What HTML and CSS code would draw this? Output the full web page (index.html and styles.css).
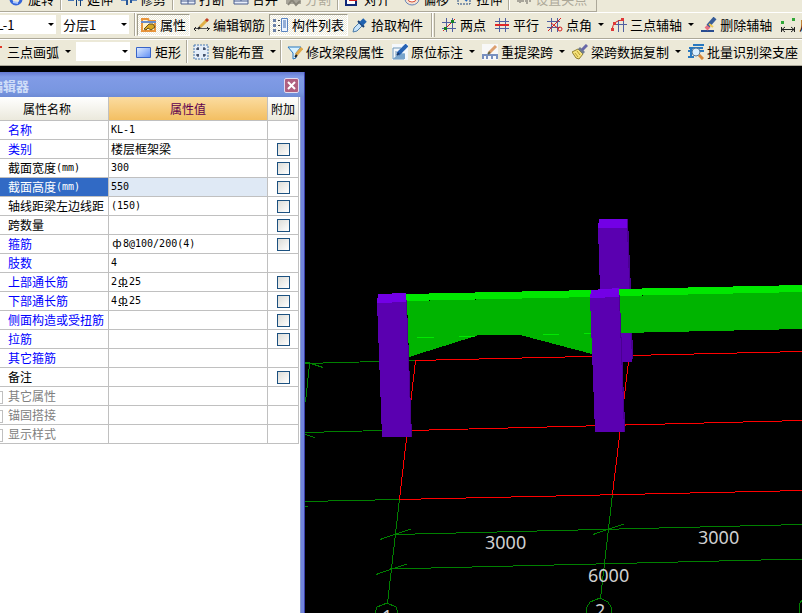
FILE: index.html
```html
<!DOCTYPE html>
<html lang="zh-CN">
	<head>
		<meta charset="UTF-8">
		<meta name="viewport" content="width=device-width, initial-scale=1">
		<title>属性编辑器</title>
		<link rel="stylesheet" href="styles.css">
	</head>

	<body>
		<header class="toolbars">
			<!-- edit bar -->
			<div class="bar bar-edit">
				<button class="btn"><svg class="icon" viewBox="0 0 16 16"><circle cx="7" cy="8" r="5" fill="none" stroke="#3565d8" stroke-width="3"/><path d="M4 11l5 1" stroke="#a9c4ff" stroke-width="2"/></svg>旋转</button>
				<span class="sep"></span>
				<button class="btn"><svg class="icon" viewBox="0 0 16 16"><path d="M0 9h6M10 9h5" stroke="#4878b8" stroke-width="2"/><path d="M8.500 2v13M12.500 2v13" stroke="#123c74"/></svg>延伸</button>
				<button class="btn"><svg class="icon" viewBox="0 0 16 16"><path d="M0 9h6M11 9h5" stroke="#6088c0" stroke-width="2"/><path d="M6 2v12M10 2v10" stroke="#285898" stroke-width="2"/></svg>修剪</button>
				<span class="sep"></span>
				<button class="btn"><svg class="icon" viewBox="0 0 16 16"><path d="M1 4h14v9H1zM8 4v9M1 10h14" fill="#e8eefa" stroke="#485c8c"/></svg>打断</button>
				<button class="btn"><svg class="icon" viewBox="0 0 16 16"><path d="M1 4h14v9H1zM8 4v6M1 10h14" fill="#e8eefa" stroke="#485c8c"/></svg>合并</button>
				<button class="btn" disabled><svg class="icon" viewBox="0 0 16 16"><path d="M0 6h15v7H0z" fill="#a8a59a"/><path d="M2 14l4-5 4 5 4-4" fill="none" stroke="#88857a" stroke-width="2"/></svg>分割</button>
				<span class="sep"></span>
				<button class="btn drop"><svg class="icon" viewBox="0 0 16 16"><path d="M1 2h10v12H1z" fill="#fff" stroke="#102878" stroke-width="2"/><path d="M4 9h8" stroke="#d02020" stroke-width="2"/></svg>对齐</button>
				<button class="btn"><svg class="icon" viewBox="0 0 16 16"><ellipse cx="8" cy="8" rx="7" ry="6" fill="#f4e0d0" stroke="#6484b8"/><ellipse cx="8" cy="8" rx="4" ry="3" fill="#fff" stroke="#d85038"/></svg>偏移</button>
				<button class="btn"><svg class="icon" viewBox="0 0 16 16"><path d="M1 3h12v10H1z" fill="none" stroke="#204880" stroke-dasharray="2 1"/><path d="M5 5l5 5" stroke="#2868c0" stroke-width="2"/></svg>拉伸</button>
				<span class="sep"></span>
				<button class="btn" disabled><svg class="icon" viewBox="0 0 16 16"><path d="M1 10h14M4 12v-5M11 13v-5" stroke="#a8a59a" stroke-width="2" stroke-dasharray="3 1"/></svg>设置夹点</button>
			</div>

			<!-- component bar -->
			<div class="bar bar-component">
				<label class="combo combo-name"><select aria-label="构件"><option>KL-1</option></select></label>
				<label class="combo combo-layer"><select aria-label="分层"><option>分层1</option></select></label>
				<span class="sep"></span>
				<button class="btn pressed"><svg class="icon" viewBox="0 0 16 16"><path d="M1 2h6l1 2h6v10H1z" fill="#fff3c8" stroke="#e8953c" stroke-width="2"/><path d="M0 5h15" stroke="#6a8cc8" stroke-width="2"/><path d="M3 12l5-5h4l2 3-4 3-3-2-2 2z" fill="#d8a820" stroke="#605020"/></svg>属性</button>
				<button class="btn"><svg class="icon" viewBox="0 0 16 16"><path d="M0 11.500h16" stroke="#555"/><path d="M2 10l-2 2 2 2M13 10l2 2-2 2" fill="none" stroke="#222"/><path d="M6 10l7-7" stroke="#e0b048" stroke-width="3"/><path d="M12 4l2-2" stroke="#c04028" stroke-width="3"/><path d="M4 12l2-2" stroke="#222" stroke-width="2"/></svg>编辑钢筋</button>
				<button class="btn pressed"><svg class="icon" viewBox="0 0 16 16"><path d="M0 2h3v3H0zM0 7h3v3H0zM0 12h3v3H0z" fill="#6a80a8"/><path d="M5 3.500h2M5 8.500h2M5 13.500h2" stroke="#444"/><path d="M8.500 1.500h6v13h-6z" fill="#eef5ff" stroke="#5a84c0"/><path d="M10 4h3M10 6h3M10 8h3M10 10h3" stroke="#3a68b0"/></svg>构件列表</button>
				<button class="btn"><svg class="icon" viewBox="0 0 16 16"><path d="M1 15l1-4 6-6 3 3-6 6z" fill="#c8e4fa" stroke="#4c7ca8"/><path d="M6 4l6 6" stroke="#143c70" stroke-width="2"/><path d="M9 7l4-4" stroke="#1f62b0" stroke-width="5"/></svg>拾取构件</button>
				<span class="grip"></span>
				<button class="btn"><svg class="icon" viewBox="0 0 16 16"><path d="M5.500 1v14M11.500 1v14M1 5.500h14M1 11.500h14" stroke="#5060a0"/><path d="M2 14L14 2" stroke="#d82020"/><path d="M3 10h3v3H3zM10 3h3v3h-3z" fill="#168020"/></svg>两点</button>
				<button class="btn"><svg class="icon" viewBox="0 0 16 16"><path d="M5.500 1v14M11.500 1v14" stroke="#5060a0"/><path d="M1 4.500h14M1 11.500h14" stroke="#5060a0"/><path d="M1 8h14" stroke="#e02828" stroke-width="2"/></svg>平行</button>
				<button class="btn drop"><svg class="icon" viewBox="0 0 16 16"><path d="M4.500 1v14M10.500 1v14M0 4.500h13M0 10.500h13" stroke="#5060a0"/><path d="M1 14L14 1M4 6l8 6" stroke="#d82020"/><circle cx="13" cy="12" r="2" fill="none" stroke="#d82020"/></svg>点角</button>
				<button class="btn drop"><svg class="icon" viewBox="0 0 16 16"><path d="M7.500 3v12M12.500 1v14M2 7.500h14" stroke="#5060a0"/><path d="M1 13Q2 3 12 3" fill="none" stroke="#d82020"/><path d="M0 11h3v3H0zM10 1h3v3h-3zM2 5h3v3H2z" fill="#e03838"/></svg>三点辅轴</button>
				<button class="btn"><svg class="icon" viewBox="0 0 16 16"><path d="M0 14h13" stroke="#284c90" stroke-width="2"/><path d="M5 12l3-3" stroke="#e87080" stroke-width="4"/><path d="M7 9l7-8" stroke="#365c98" stroke-width="4"/><path d="M8 7l4 3" stroke="#f0c850" stroke-width="2"/></svg>删除辅轴</button>
				<button class="btn"><svg class="icon" viewBox="0 0 16 16"><path d="M1 4h3v3H1zM12 1h3v3h-3z" fill="#30a838"/><path d="M1.500 10v5M14.500 10v5M2 12.500h12M5 10l-3 2.500 3 2.500M11 10l3 2.500-3 2.500" fill="none" stroke="#222"/></svg>尺</button>
			</div>

			<!-- drawing bar -->
			<div class="bar bar-draw">
				<button class="btn drop"><svg class="icon" viewBox="0 0 16 16"><path d="M2 14Q4 3 13 3" fill="none" stroke="#5060a0"/><path d="M11 2h3v2h-3z" fill="#e03828"/></svg>三点画弧</button>
				<label class="combo combo-arc"><select aria-label="画弧方式"><option></option></select></label>
				<button class="btn"><svg class="icon" viewBox="0 0 16 16"><defs><linearGradient id="rect-fill" x2="1" y2="1"><stop stop-color="#e4f0ff"/><stop offset="1" stop-color="#5d8cf4"/></linearGradient></defs><path d="M.5 3.500h14v10H.5z" fill="url(#rect-fill)" stroke="#3864c8"/></svg>矩形</button>
				<span class="sep"></span>
				<button class="btn drop"><svg class="icon" viewBox="0 0 16 16"><path d="M1 1h14v14H1z" fill="#e4edf8" stroke="#4878b0" stroke-dasharray="2 1"/><path d="M5 3v3M3 5h3M11 3v3M10 5h3M5 10v3M3 11h3M11 10v3M10 11h3" stroke="#102040"/></svg>智能布置</button>
				<span class="sep"></span>
				<button class="btn"><svg class="icon" viewBox="0 0 16 16"><path d="M1 3h13L9 9v5l-3 1V9z" fill="#d8f2ff" stroke="#2878c0"/><path d="M9 11l6-7" stroke="#e0a848" stroke-width="3"/><path d="M8 13l2-2" stroke="#222" stroke-width="2"/></svg>修改梁段属性</button>
				<button class="btn drop"><svg class="icon" viewBox="0 0 16 16"><path d="M0 0h16v16H0z" fill="#f4f8fc"/><path d="M1 4h8M1 4v11h11V9M4 7v5h5" fill="none" stroke="#7098b8"/><path d="M1 15h12v-5L9 9l-5 3z" fill="#78a4cc"/><path d="M6 10l9-9" stroke="#2864b4" stroke-width="4"/><path d="M5 11l2-2" stroke="#153870" stroke-width="2"/></svg>原位标注</button>
				<button class="btn drop"><svg class="icon" viewBox="0 0 16 16"><path d="M0 0h16v16H0z" fill="#f8f8f8"/><path d="M1 15v-4h4v4M5 11h5v4M10 11h5v4" fill="none" stroke="#7890c0" stroke-width="2"/><path d="M7 9l7-7" stroke="#dda070" stroke-width="3"/><path d="M6 10l2-2" stroke="#664" stroke-width="2"/></svg>重提梁跨</button>
				<button class="btn drop"><svg class="icon" viewBox="0 0 16 16"><path d="M0 8l6-3 5 5-4 5-3-1z" fill="#f5e27a" stroke="#908030"/><path d="M6 5l5 5 2-2-5-5z" fill="#707c90"/><path d="M10 6l5-5" stroke="#6868a8" stroke-width="3"/><path d="M3 9l3 4M5 7l3 4" stroke="#b89c30"/></svg>梁跨数据复制</button>
				<button class="btn"><svg class="icon" viewBox="0 0 16 16"><path d="M5 1h11M1 4h14M0 7h6M12 7h4M3 4v9M0 13h6" fill="none" stroke="#2878c0" stroke-width="2"/><circle cx="8" cy="8" r="4" fill="#d8efff" stroke="#587898"/><path d="M11 11l4 4" stroke="#d88838" stroke-width="3"/></svg>批量识别梁支座</button>
			</div>
		</header>

		<main class="workspace">
			<section class="panel">
				<div class="titlebar">
					<span class="title">属性编辑器</span>
					<button class="close" aria-label="关闭"><svg viewBox="0 0 13 13"><path d="M3 3l7 7M10 3l-7 7" stroke="#fff" stroke-width="2"/></svg></button>
				</div>
				<table class="props">
					<thead>
						<tr><th class="col-name">属性名称</th><th class="col-value">属性值</th><th class="col-extra">附加</th></tr>
					</thead>
					<tbody>
						<tr class="key"><td>名称</td><td>KL-1</td><td></td></tr>
						<tr class="key"><td>类别</td><td><span class="cn">楼层框架梁</span></td><td><input type="checkbox" aria-label="类别"></td></tr>
						<tr><td>截面宽度<span class="unit">(mm)</span></td><td>300</td><td><input type="checkbox" aria-label="截面宽度"></td></tr>
						<tr class="selected"><td>截面高度<span class="unit">(mm)</span></td><td>550</td><td><input type="checkbox" aria-label="截面高度"></td></tr>
						<tr><td>轴线距梁左边线距</td><td>(150)</td><td><input type="checkbox" aria-label="轴线距梁左边线距"></td></tr>
						<tr><td>跨数量</td><td></td><td><input type="checkbox" aria-label="跨数量"></td></tr>
						<tr class="key"><td>箍筋</td><td><span class="dia">ф</span>8@100/200(4)</td><td><input type="checkbox" aria-label="箍筋"></td></tr>
						<tr class="key"><td>肢数</td><td>4</td><td></td></tr>
						<tr class="key"><td>上部通长筋</td><td>2<span class="dia ribbed">ф</span>25</td><td><input type="checkbox" aria-label="上部通长筋"></td></tr>
						<tr class="key"><td>下部通长筋</td><td>4<span class="dia ribbed">ф</span>25</td><td><input type="checkbox" aria-label="下部通长筋"></td></tr>
						<tr class="key"><td>侧面构造或受扭筋</td><td></td><td><input type="checkbox" aria-label="侧面构造或受扭筋"></td></tr>
						<tr class="key"><td>拉筋</td><td></td><td><input type="checkbox" aria-label="拉筋"></td></tr>
						<tr class="key"><td>其它箍筋</td><td></td><td></td></tr>
						<tr><td>备注</td><td></td><td><input type="checkbox" aria-label="备注"></td></tr>
						<tr class="group"><td><button class="expand" aria-label="展开"></button>其它属性</td><td></td><td></td></tr>
						<tr class="group"><td><button class="expand" aria-label="展开"></button>锚固搭接</td><td></td><td></td></tr>
						<tr class="group"><td><button class="expand" aria-label="展开"></button>显示样式</td><td></td><td></td></tr>
					</tbody>
				</table>
			</section>

			<svg class="scene" viewBox="305 66 497 547" preserveAspectRatio="xMinYMin slice">
				<!-- axis grid -->
				<g class="axis">
					<path d="M305 363.500L415 360.500M305 432.500L382 430.500M305 501.500L399 499.500"/>
					<path d="M395 534.500L802 524.500M390 569L802 559"/>
					<path d="M399.500 499L387.500 603M612.500 494L600.500 598"/>
					<path d="M309.500 364L305.500 402M305 362.500h3l15 5M305 434.500l10 3M305 506.500h3"/>
					<path d="M380 539.500l31-10.500M376 574.500l31-10.500M593 534.500l31-10.500"/>
					<path d="M375 613l2-6 10-4 9 4 2 6M586 613l1-6 3-5 10-4 8 4 3 5 1 6M802 600l-3 5v8"/>
				</g>
				<g class="span">
					<path d="M415 360.500L802 351.500M410 430.500L802 420.500M399 499.500L802 490.500"/>
					<path d="M415.500 361L399.500 499M628.500 362L612.500 494"/>
				</g>

				<!-- rear column -->
				<path class="side" d="M626 219h2l3 71 2 66-1 6h-8z"/>
				<path class="column" d="M598 228h29l5 134h-11l-21-72z"/>
				<path class="cap" d="M599 219h28v9h-29z"/>

				<!-- beams -->
				<path class="beam" d="M407 301L592 297v57l-68-18-4-1h-41l-70 22z"/>
				<path class="beam-top" d="M406 294L592 290v7L406 301z"/>
				<path class="beam" d="M620 296L802 292v37L621 333z"/>
				<path class="beam-top" d="M619 289L802 285v7L619 296z"/>
				<path class="beam-edge" d="M417 337.500h17M459 336.500h16M543 334.500h16M584 333.500h8"/>

				<!-- front columns -->
				<path class="side" d="M406 295l1 10 5 132h-2l-5-135z"/>
				<path class="column" d="M377 303l29-1 5 135h-29z"/>
				<path class="cap" d="M378 294l28-1v9l-29 1z"/>
				<path class="side" d="M619 290l1 10 5 124v8h-3z"/>
				<path class="column" d="M590 298l29-1 5 135h-29z"/>
				<path class="cap" d="M591 290l28-2v9l-29 1z"/>

				<!-- dimensions -->
				<g class="dim">
					<text x="485" y="549">3000</text>
					<text x="698" y="544">3000</text>
					<text x="588" y="582">6000</text>
					<text x="382" y="623">1</text>
					<text x="595" y="617">2</text>
				</g>
			</svg>
		</main>
	</body>
</html>
```

FILE: styles.css
```css
* { box-sizing: border-box; }
body, html { height: 100%; margin: 0; padding: 0; }
body {
	display: flex;
	flex-direction: column;
	overflow: hidden;
	background: #000;
	font-family: "Noto Sans CJK SC", sans-serif;
	font-size: 13px;
	color: #000;
}
button, select { font: inherit; color: inherit; }

/* toolbars */
.toolbars { margin-top: -15px; background: #ece9d8; overflow: hidden; flex: none; }
.bar {
	display: flex;
	align-items: center;
	height: 27px;
	padding-bottom: 2px;
	border-top: 1px solid #fff;
	border-bottom: 1px solid #aca899;
	white-space: nowrap;
}
.bar > * { flex: none; }
.bar-edit { width: 597px; padding: 0 0 0 5px; border-right: 1px solid #aca899; }
.bar-component { overflow: hidden; }
.bar-draw { margin-left: -16px; }
.btn {
	display: flex;
	align-items: center;
	gap: 3px;
	height: 22px;
	padding: 0 3px;
	border: 1px solid transparent;
	background: none;
	line-height: 20px;
}
.btn:disabled { color: #aca899; }
.btn.pressed {
	border-color: #9d9a8b #fff #fff #9d9a8b;
	background: repeating-conic-gradient(#fff 0 25%, #ece9d8 0 50%) 0 0 / 2px 2px;
}
.btn.drop { padding-right: 2px; }
.btn.drop::after {
	content: "";
	margin-left: 3px;
	border: 3px solid transparent;
	border-top-color: #000;
	border-bottom: 0;
}
.bar-edit .btn.drop { padding-right: 0; }
.bar-edit .btn.drop::after { margin: 0; }
.icon { display: block; width: 16px; height: 16px; }
.sep { width: 2px; height: 23px; margin: 0 1px; background: #aca899; border-right: 1px solid #fff; }
.bar-edit .sep { margin: 0 2px; }
.grip { width: 4px; height: 25px; margin: 0 2px 0 4px; border: 1px solid #aca899; border-width: 0 1px; box-shadow: inset 1px 0 #fff; }

.combo { position: relative; display: block; height: 19px; background: #fff; }
.combo select {
	display: block;
	width: 100%;
	height: 19px;
	padding: 0 0 0 2px;
	border: 0;
	background: none;
	line-height: 19px;
	appearance: none;
}
.combo::after {
	content: "";
	position: absolute;
	right: 2px;
	top: 8px;
	border: 3px solid transparent;
	border-top-color: #000;
	border-bottom: 0;
	pointer-events: none;
}
.combo-name { width: 70px; margin: 0 5px 0 -14px; }
.combo-layer { width: 68px; margin-right: 4px; }
.combo-arc { width: 54px; margin: 0 2px; }

/* property panel */
.workspace { display: flex; flex: 1; min-height: 0; }
.panel {
	flex: none;
	width: 305px;
	margin-top: 6px;
	background: #fff;
	border-right: 1px solid #3a3fa8;
	box-shadow: inset -3px 0 #7184dc, inset -4px 0 #8c9fd0;
}
.titlebar {
	display: flex;
	align-items: center;
	justify-content: space-between;
	height: 25px;
	padding: 2px 5px 0 0;
	overflow: hidden;
	background: linear-gradient(#6478d0, #819be6 20%, #7896e0 80%, #6d8ad4);
}
.title { margin-left: -36px; font-weight: bold; color: #d0def8; }
.close { width: 15px; height: 15px; padding: 0; border: 1px solid #e4dcf0; border-radius: 2px; background: #b06080; }
.close svg { display: block; width: 13px; height: 13px; }

.props { width: 299px; border-collapse: separate; border-spacing: 0; table-layout: fixed; font-size: 12px; line-height: 18px; }
.props th, .props td {
	height: 19px;
	padding: 0 0 0 2px;
	border: 1px solid #c0c0c0;
	border-width: 0 1px 1px 0;
	white-space: nowrap;
	overflow: hidden;
}
.props th { height: 24px; padding: 0; font-weight: normal; background: linear-gradient(#fff, #ebe9dc); }
.props td:first-child { padding-left: 8px; }
.props td:last-child { padding: 0; }
.props td:nth-child(2) { font-family: "DejaVu Sans Mono", monospace; font-size: 10px; }
.props .col-name { width: 109px; padding-right: 14px; }
.props .col-value { width: 159px; color: #600050; background: linear-gradient(#fbdca0, #f3bf62); }
.props .cn { font-family: "Noto Sans CJK SC", sans-serif; font-size: 12px; line-height: 18px; }
.cn, .unit, .dia { display: inline-block; vertical-align: top; }
.unit { font-family: "DejaVu Sans Mono", monospace; font-size: 10px; }
.dia { width: 12px; text-align: center; font-family: "DejaVu Sans", sans-serif; font-size: 11px; }
.ribbed { text-decoration: underline; }
.key td:first-child { color: #00f; }
.selected td:first-child { color: #fff; background: #316ac5; }
.selected td:nth-child(2) { background: #dfe9f5; }
.group td:first-child { color: #808080; }
.expand {
	width: 12px;
	height: 13px;
	margin: 0 5px 0 -17px;
	padding: 0;
	border: 1px solid #c0c0c0;
	background: #fff;
	vertical-align: middle;
}
.props input {
	display: block;
	width: 13px;
	height: 13px;
	margin: 0 0 0 9px;
	border: 1px solid #1c5180;
	background: linear-gradient(135deg, #dcdcd7, #fff);
	appearance: none;
}

/* model view */
.scene { display: block; flex: 1; min-width: 0; height: 100%; background: #000; shape-rendering: crispEdges; }
.axis { fill: none; stroke: #008000; }
.span { fill: none; stroke: #f00; }
.column { fill: #5a00b0; }
.cap { fill: #7300e6; }
.side { fill: #4a0092; }
.beam { fill: #00b400; }
.beam-top { fill: #00e800; }
.beam-edge { stroke: #00e800; }
.dim { fill: #d0d0d0; font-family: "Noto Sans", sans-serif; font-size: 18px; }
```
